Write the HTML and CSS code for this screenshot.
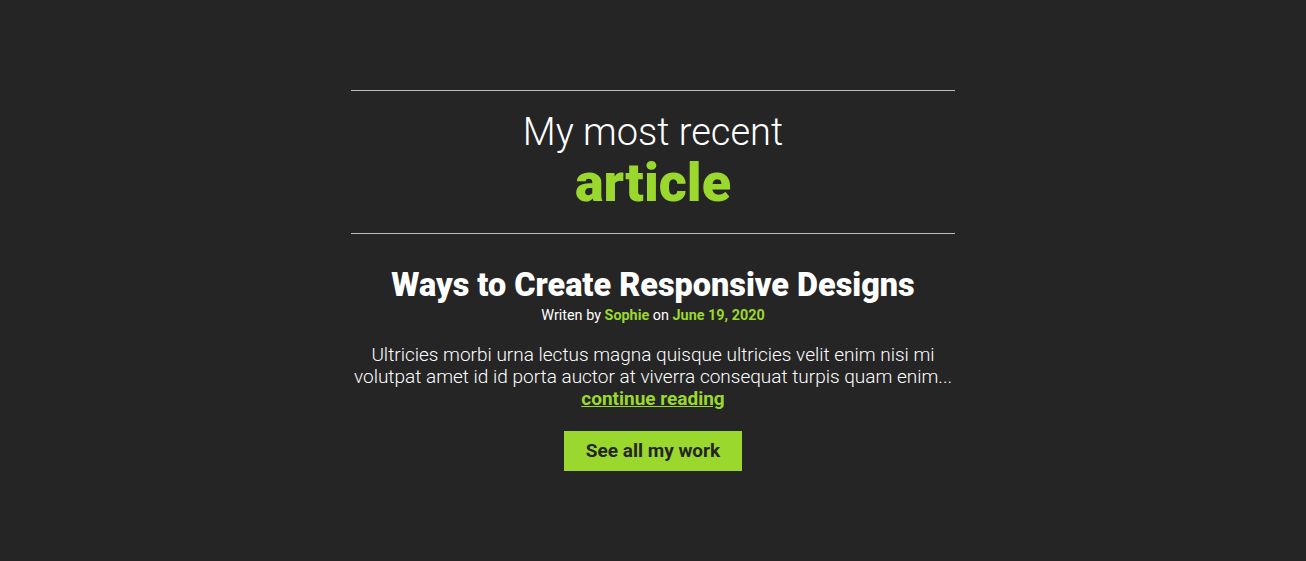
FILE: index.html
```html
<!DOCTYPE html>
<html lang="en">
<head>
<meta charset="utf-8">
<title>My most recent article</title>
<link rel="stylesheet" href="styles.css">
</head>
<body>
<section class="recent">
  <div class="container">
    <header class="section-head">
      <h2 class="section-title">My most recent <strong>article</strong></h2>
    </header>
    <article class="article">
      <h3 class="article-title">Ways to Create Responsive Designs</h3>
      <p class="article-meta">Writen by <strong>Sophie</strong> on <strong>June 19, 2020</strong></p>
      <p class="article-body">Ultricies morbi urna lectus magna quisque ultricies velit enim nisi mi volutpat amet id id porta auctor at viverra consequat turpis quam enim... <a class="read-more" href="#">continue reading</a></p>
    </article>
    <a class="btn" href="#">See all my work</a>
  </div>
</section>
</body>
</html>
```
FILE: styles.css
```css
* { box-sizing: border-box; }
html, body { margin: 0; padding: 0; }
body {
  background: #252525;
  color: #fff;
  font-family: Roboto, "Liberation Sans", sans-serif;
  font-weight: 300;
  height: 561px;
}
.recent { padding-top: 90px; }
.container {
  width: 604px;
  margin: 0 auto;
  text-align: center;
}
.section-head {
  border-top: 1px solid #bdbdbd;
  border-bottom: 1px solid #bdbdbd;
  padding: 21px 0 23px;
}
.section-title {
  margin: 0;
  font-size: 38px;
  font-weight: 300;
  line-height: 1.1;
}
.section-title strong {
  display: block;
  margin-top: 2px;
  color: #9ad82e;
  font-size: 54px;
  font-weight: 900;
  line-height: 1;
}
.article { padding-top: 32px; }
.article-title {
  margin: 0;
  font-size: 32.4px;
  font-weight: 900;
  line-height: 38px;
}
.article-meta {
  margin: 3px 0 0;
  font-size: 14.4px;
  font-weight: 400;
}
.article-meta strong { color: #9ad82e; font-weight: 700; }
.article-body {
  margin: 20px 0 0;
  font-size: 19px;
  line-height: 22px;
}
.read-more {
  color: #9ad82e;
  font-weight: 700;
}
.btn {
  display: inline-block;
  margin-top: 21px;
  width: 178px;
  height: 40px;
  line-height: 40px;
  background: #9ad82e;
  color: #252525;
  font-size: 19px;
  font-weight: 700;
  text-decoration: none;
}
```
